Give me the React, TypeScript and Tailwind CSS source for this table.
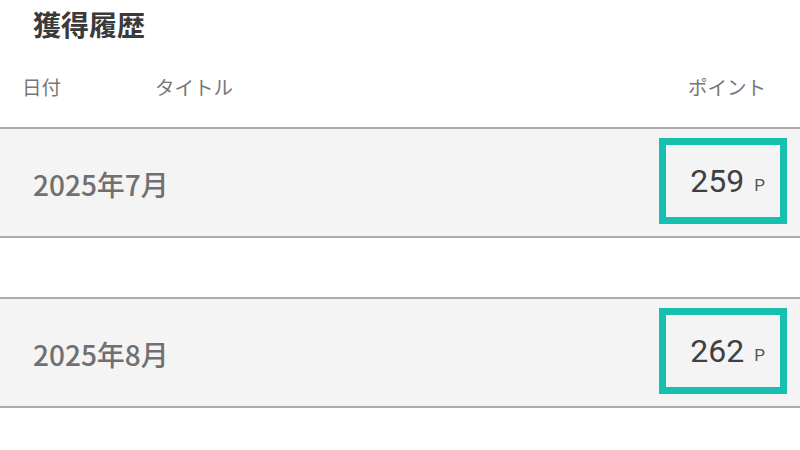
const JP = "font-['Noto_Sans_CJK_JP','Noto_Sans',sans-serif]"

const HISTORY = [
  { date: '2025年7月', points: 259 },
  { date: '2025年8月', points: 262 },
]

function HistoryRow({ date, points }: { date: string; points: number }) {
  return (
    <div className="h-[111px] border-y-2 border-[#ababab] bg-[#f4f4f4] flex items-center justify-between pl-[33px] pr-[13px]">
      <span className={`${JP} text-[28px] font-medium text-[#707070] mt-[2px]`}>{date}</span>
      <div className="w-[128px] h-[86px] -mt-[4px] border-[7px] border-[#17bfae] flex items-center justify-end pr-[15px]">
        <span className="font-['Roboto',sans-serif] text-[32px] text-[#404040] leading-none">{points}</span>
        <span className="font-['Roboto',sans-serif] text-[17px] text-[#555] ml-[10px] mt-[10px] leading-none">P</span>
      </div>
    </div>
  )
}

export default function App() {
  return (
    <div className={`w-[800px] h-[450px] bg-white overflow-hidden ${JP}`}>
      <h2 className="pl-[33px] pt-[4px] text-[28px] leading-[40px] font-bold text-[#3a3a3a]">獲得履歴</h2>
      <div className="flex items-center h-[46px] mt-[20px] mb-[17px] text-[19.5px] text-[#777] pr-[34px]">
        <span className="pl-[22px] w-[155px]">日付</span>
        <span className="flex-1">タイトル</span>
        <span>ポイント</span>
      </div>
      <div className="flex flex-col gap-[59px]">
        {HISTORY.map((item) => (
          <HistoryRow key={item.date} {...item} />
        ))}
      </div>
    </div>
  )
}
